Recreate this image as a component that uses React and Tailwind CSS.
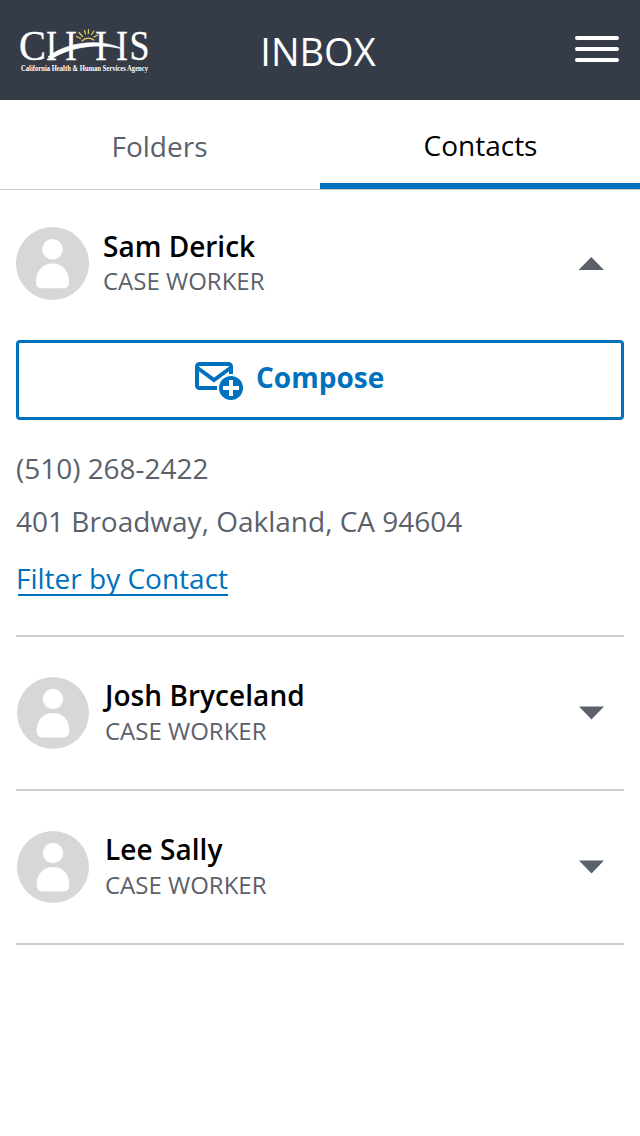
import React from "react";

function Logo() {
  return (
    <svg className="overflow-visible" width="132" height="48" viewBox="18 27 132 48" role="img" aria-label="CHHS">
      <g fill="#fff" stroke="#fff" strokeWidth="0.3" fontFamily="'Liberation Serif', serif">
        <text x="19" y="60.3" fontSize="42" textLength="27" lengthAdjust="spacingAndGlyphs">C</text>
        <text x="46" y="60.3" fontSize="42" textLength="11" lengthAdjust="spacingAndGlyphs">I</text>
        <text x="65" y="60.3" fontSize="42" textLength="12" lengthAdjust="spacingAndGlyphs">I</text>
        <text x="95" y="60.3" fontSize="42" textLength="12" lengthAdjust="spacingAndGlyphs">I</text>
        <text x="116" y="60.3" fontSize="42" textLength="12" lengthAdjust="spacingAndGlyphs">I</text>
        <text x="129.5" y="60.3" fontSize="42" textLength="20" lengthAdjust="spacingAndGlyphs">S</text>
      </g>
      <text x="21" y="70.800" fill="#fff" fontFamily="'Liberation Serif', serif" fontSize="7.2" fontWeight="700" textLength="127" lengthAdjust="spacingAndGlyphs">California Health &amp; Human Services Agency</text>
      <path d="M48.500 56.500C66 43 98 37.500 123 49C98 42.500 70 46.500 49.500 60Z" fill="#fff" stroke="#fff" strokeWidth="0.8" />
      <g stroke="#e6cf62" strokeWidth="1.2" fill="none" strokeLinecap="round">
        <path d="M82 41Q87 36 94 40" />
        <path d="M80.500 38.500L76.500 36.500M82.500 36.500L79 32.500M85.500 34L84.500 30.500M88.300 33.500L88.500 29.500M91.500 34.500L94 31M94 37L97.500 35" />
      </g>
    </svg>
  );
}

function Avatar({ className }) {
  return (
    <svg className={className} viewBox="0 0 73 73" aria-hidden="true">
      <circle cx="36.500" cy="36.500" r="36.500" fill="#d6d7d9" />
      <circle cx="36.500" cy="22.300" r="10.300" fill="#fff" />
      <path d="M36.500 36.500C27 36.500 20 44 20 53.500V55.500Q20 61.300 26 61.300H47Q53 61.300 53 55.500V53.500C53 44 46 36.500 36.500 36.500Z" fill="#fff" />
    </svg>
  );
}

function ComposeIcon() {
  return (
    <svg width="50" height="40" viewBox="194 361 50 40" fill="none" aria-hidden="true">
      <rect x="197" y="364" width="34" height="24" rx="2.500" stroke="#0071bc" strokeWidth="4" />
      <path d="M197 367.500L214 380L231 367.500" stroke="#0071bc" strokeWidth="4" />
      <circle cx="231" cy="388" r="14" fill="#fff" />
      <circle cx="231" cy="388" r="12" fill="#0071bc" />
      <path d="M223 388H239M231 380V396" stroke="#fff" strokeWidth="4" />
    </svg>
  );
}

function Caret({ up }) {
  return (
    <svg width="26" height="14" viewBox="0 0 26 14" fill="#5b616b" aria-hidden="true">
      {up ? <path d="M13.300 0L26 13H0.600Z" /> : <path d="M0 0.500H25L12.500 13.500Z" />}
    </svg>
  );
}

function ContactRow({ name }) {
  return (
    <section className="flex h-[154px] items-start border-b-2 border-[#cccccc] pl-px pr-[19px] pt-10">
      <Avatar className="h-[72px] w-[72px] shrink-0" />
      <div className="-mt-px ml-4 flex-1">
        <h2 className="whitespace-nowrap text-[28px] font-semibold leading-[38px] tracking-[0.05px] text-black">{name}</h2>
        <p className="text-[24px] leading-[33px] text-[#5b616b]">CASE WORKER</p>
      </div>
      <div className="pt-[29px]"><Caret /></div>
    </section>
  );
}

export default function App() {
  return (
    <div className="min-h-[1136px] w-[640px] bg-white font-['Open_Sans','Noto_Sans',sans-serif]">
      <header className="grid h-[100px] grid-cols-3 items-start bg-[#353c48]">
        <div className="pl-[18px] pt-[27px]"><Logo /></div>
        <h1 className="pr-1 pt-[25px] text-center text-[38px] leading-[52px] text-white">INBOX</h1>
        <button className="mr-[21px] mt-9 flex flex-col gap-[7px] justify-self-end" aria-label="Menu">
          <span className="h-1 w-11 rounded-full bg-white" />
          <span className="h-1 w-11 rounded-full bg-white" />
          <span className="h-1 w-11 rounded-full bg-white" />
        </button>
      </header>
      <nav className="grid h-[90px] grid-cols-2 border-b border-[#cccccc] text-center text-[28px] leading-[38px]">
        <button className="flex justify-center pr-px pt-[27px] text-[#5b616b]">Folders</button>
        <button className="flex justify-center border-b-[6px] border-[#0071bc] pl-px pt-[26px] text-black">Contacts</button>
      </nav>
      <main className="px-4 text-[28px] leading-[38px]">
        <section className="h-[447px] border-b-2 border-[#cccccc] pt-[37px]">
          <div className="flex h-[113px] items-start pr-5">
            <Avatar className="h-[73px] w-[73px] shrink-0" />
            <div className="ml-[14px] flex-1">
              <h2 className="whitespace-nowrap font-semibold leading-[38px] text-black">Sam Derick</h2>
              <p className="-mt-px text-[24px] leading-[33px] text-[#5b616b]">CASE WORKER</p>
            </div>
            <div className="pt-[30px]"><Caret up /></div>
          </div>
          <button className="flex h-20 w-full rounded-[4px] border-[3px] border-[#0071bc] pl-[175px] pt-[15px] font-bold text-[#0071bc]">
            <span className="pt-[3px]"><ComposeIcon /></span>
            <span className="ml-3">Compose</span>
          </button>
          <p className="mt-[29px] tracking-[-0.03px] text-[#5b616b]">(510) 268-2422</p>
          <p className="mt-[15px] text-[#5b616b]">401 Broadway, Oakland, CA 94604</p>
          <a className="ml-0.5 mt-[19px] inline-block h-[37px] border-b-2 border-[#0071bc] text-[#0071bc]" href="#filter">
            <span className="-ml-0.5">Filter by Contact</span>
          </a>
        </section>
        <ContactRow name="Josh Bryceland" />
        <ContactRow name="Lee Sally" />
      </main>
    </div>
  );
}
